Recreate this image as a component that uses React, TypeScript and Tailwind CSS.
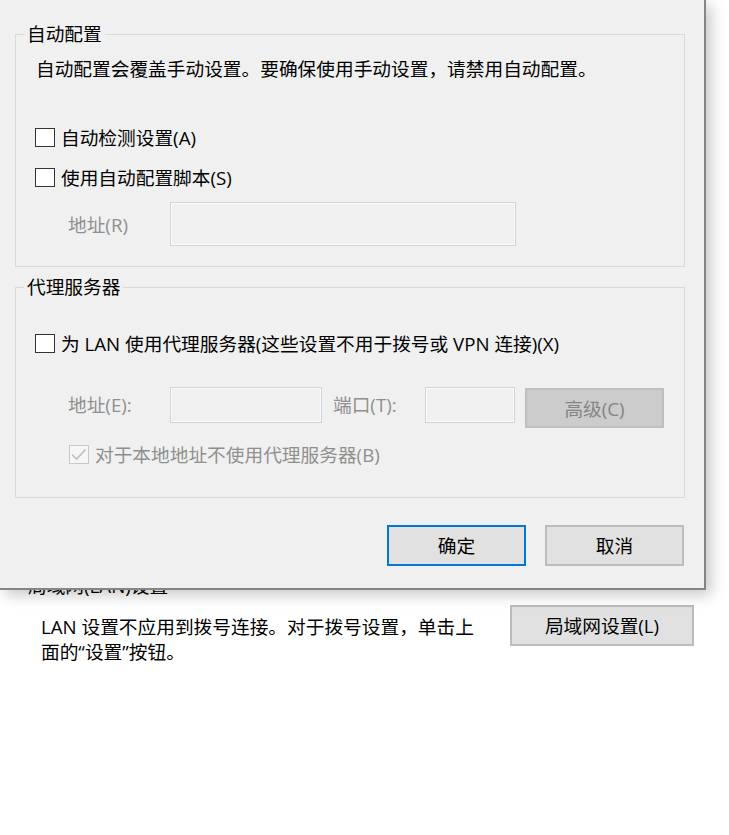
import type { ReactNode } from 'react'

function CheckBox({ checked, disabled }: { checked?: boolean; disabled?: boolean }) {
  return (
    <span
      className={`flex h-[19px] w-[20px] shrink-0 items-center justify-center border ${
        disabled ? 'border-[#c8c8c8] bg-[#f6f6f6]' : 'border-[#333333] bg-white'
      }`}
    >
      {checked && (
        <svg width="18" height="17" viewBox="0 0 18 17" fill="none">
          <polyline points="2,8.5 6.5,13 15.5,3.5" stroke="#bdbdbd" strokeWidth="1.6" />
        </svg>
      )}
    </span>
  )
}

function CheckRow({ label, checked, disabled }: { label: string; checked?: boolean; disabled?: boolean }) {
  return (
    <label className="flex h-[24px] items-center gap-[6px]">
      <CheckBox checked={checked} disabled={disabled} />
      <span className={disabled ? 'text-[#8f8f8f]' : 'text-black'}>{label}</span>
    </label>
  )
}

function Group({ title, children, className = '' }: { title: string; children: ReactNode; className?: string }) {
  return (
    <fieldset className={`border border-[#d9d9d9] ${className}`}>
      <legend className="ml-[8px] px-[3px] leading-[24px]">{title}</legend>
      <div className="px-[19px]">{children}</div>
    </fieldset>
  )
}

const disabledInput = 'border border-[#d2d2d2] bg-[#f0f0f0] shadow-[inset_0_0_0_1px_#fafafa]'

export default function App() {
  return (
    <div className="relative h-[835px] w-[729px] overflow-hidden bg-white font-['Open_Sans','Noto_Sans_CJK_SC',sans-serif] text-[18.7px] leading-[25px] text-black">
      {/* page behind the dialog */}
      <div className="pt-[573px]">
        <div className="pl-[28px]">局域网(LAN)设置</div>
        <div className="flex">
          <p className="mt-[16px] w-[510px] pl-[41px] whitespace-nowrap">
            LAN 设置不应用到拨号连接。对于拨号设置，单击上
            <br />
            面的“设置”按钮。
          </p>
          <button
            type="button"
            className="mt-[7px] h-[41px] w-[184px] border-2 border-[#bcbcbc] bg-[#e1e1e1]"
          >
            局域网设置(L)
          </button>
        </div>
      </div>

      {/* dialog window */}
      <div className="absolute left-0 top-0 h-[590px] w-[706px] border-b-2 border-r-2 border-[#858585] bg-[#f0f0f0] pl-[15px] pr-[19px] pt-[22px] shadow-[5px_5px_14px_rgba(0,0,0,0.22)]">
        <Group title="自动配置" className="h-[245px]">
          <p className="mt-[10px] pl-[1px]">自动配置会覆盖手动设置。要确保使用手动设置，请禁用自动配置。</p>
          <div className="mt-[44px]">
            <CheckRow label="自动检测设置(A)" />
          </div>
          <div className="mt-[16px]">
            <CheckRow label="使用自动配置脚本(S)" />
          </div>
          <div className="mt-[13px] flex items-center">
            <span className="w-[135px] pl-[33px] text-[#8f8f8f]">地址(R)</span>
            <div className={`h-[44px] w-[346px] ${disabledInput}`} />
          </div>
        </Group>

        <Group title="代理服务器" className="mt-[8px] h-[223px]">
          <div className="mt-[32px]">
            <CheckRow label="为 LAN 使用代理服务器(这些设置不用于拨号或 VPN 连接)(X)" />
          </div>
          <div className="mt-[32px] flex h-[41px] items-start">
            <span className="w-[135px] pl-[33px] leading-[36px] text-[#8f8f8f]">地址(E):</span>
            <div className={`h-[36px] w-[152px] ${disabledInput}`} />
            <span className="ml-[11px] w-[92px] leading-[36px] text-[#8f8f8f]">端口(T):</span>
            <div className={`h-[36px] w-[90px] ${disabledInput}`} />
            <button
              type="button"
              disabled
              className="ml-[10px] mt-[1px] h-[40px] w-[139px] border-2 border-[#bfbfbf] bg-[#cccccc] text-[#848484]"
            >
              高级(C)
            </button>
          </div>
          <div className="mt-[14px] pl-[34px]">
            <CheckRow label="对于本地地址不使用代理服务器(B)" checked disabled />
          </div>
        </Group>

        <div className="mt-[27px] flex justify-end gap-[19px] pr-[1px]">
          <button type="button" className="h-[41px] w-[139px] border-2 border-[#0078d7] bg-[#e1e1e1]">
            确定
          </button>
          <button type="button" className="h-[41px] w-[139px] border-2 border-[#bcbcbc] bg-[#e1e1e1]">
            取消
          </button>
        </div>
      </div>
    </div>
  )
}
